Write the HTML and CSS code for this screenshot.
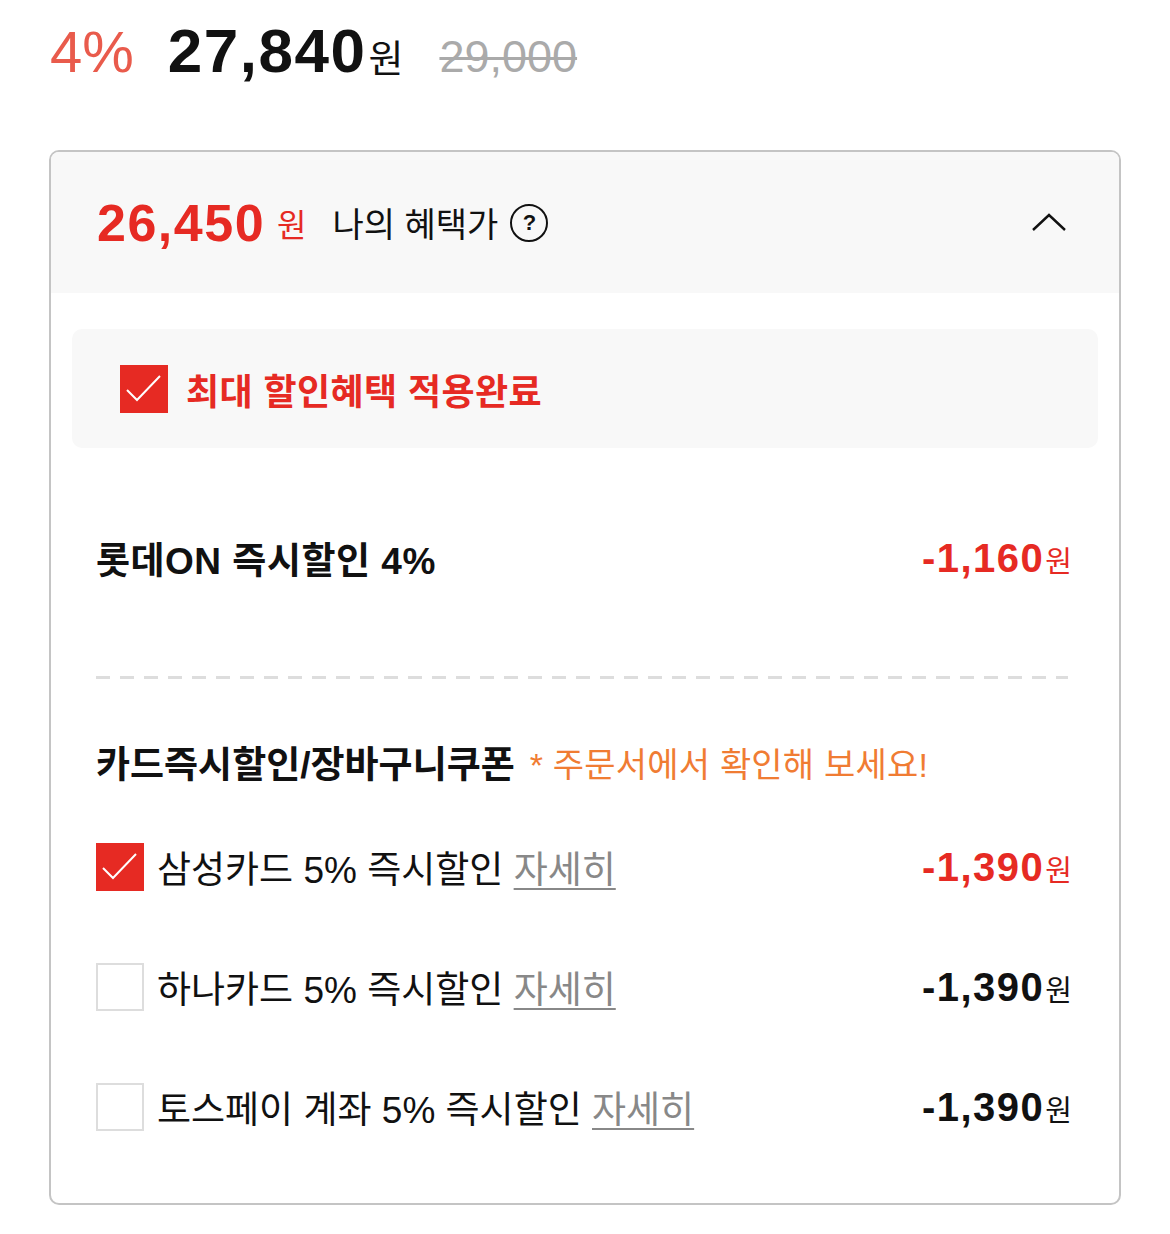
FILE: index.html
```html
<!DOCTYPE html>
<html lang="ko">
<head>
    <meta charset="UTF-8">
    <meta name="viewport" content="width=device-width, initial-scale=1.0">
    <title>혜택가</title>
    <link rel="stylesheet" href="styles.css">
</head>
<body>
    <div class="price-line">
        <span class="rate">4%</span>
        <span class="sale">27,840</span><span class="sale-won">원</span>
        <span class="origin">29,000</span>
    </div>

    <div class="benefit-box">
        <div class="benefit-head">
            <span class="my-price">26,450</span>
            <span class="my-won">원</span>
            <span class="my-label">나의 혜택가</span>
            <span class="help">?</span>
            <svg class="chevron" width="36" height="20" viewBox="0 0 36 20">
                <polyline points="2,17 18,2 34,17" fill="none" stroke="#111" stroke-width="2.4"/>
            </svg>
        </div>

        <div class="benefit-body">
            <div class="applied">
                <span class="check on">
                    <svg width="48" height="48" viewBox="0 0 48 48"><polyline points="7,25 17,35 40,11" fill="none" stroke="#fff" stroke-width="2"/></svg>
                </span>
                <span class="applied-text">최대 할인혜택 적용완료</span>
            </div>

            <div class="list">
                <div class="row first">
                    <span class="row-title">롯데ON 즉시할인 4%</span>
                    <span class="amount red">-1,160<em>원</em></span>
                </div>

                <div class="dashed"></div>

                <div class="section-title">
                    <strong>카드즉시할인/장바구니쿠폰</strong>
                    <span class="note">* 주문서에서 확인해 보세요!</span>
                </div>

                <div class="row card">
                    <span class="check on">
                        <svg width="48" height="48" viewBox="0 0 48 48"><polyline points="7,25 17,35 40,11" fill="none" stroke="#fff" stroke-width="2"/></svg>
                    </span>
                    <span class="card-name">삼성카드 5% 즉시할인 <a href="#">자세히</a></span>
                    <span class="amount red">-1,390<em>원</em></span>
                </div>

                <div class="row card">
                    <span class="check"></span>
                    <span class="card-name">하나카드 5% 즉시할인 <a href="#">자세히</a></span>
                    <span class="amount">-1,390<em>원</em></span>
                </div>

                <div class="row card">
                    <span class="check"></span>
                    <span class="card-name">토스페이 계좌 5% 즉시할인 <a href="#">자세히</a></span>
                    <span class="amount">-1,390<em>원</em></span>
                </div>
            </div>
        </div>
    </div>
</body>
</html>
```

FILE: styles.css
```css
body {
    margin: 0;
    background: #fff;
    color: #111;
    font-family: "Liberation Sans", "Noto Sans CJK KR", sans-serif;
}

.price-line {
    display: flex;
    align-items: baseline;
    padding: 15px 0 0 50px;
    height: 81px;
}
.rate { font-size: 58px; color: #e95b4c; margin-right: 34px; }
.sale { font-size: 62px; font-weight: bold; letter-spacing: 1.5px; }
.sale-won { font-size: 38px; margin-left: 2px; }
.origin {
    font-size: 45px;
    color: #aaa;
    margin-left: 36px;
    text-decoration: line-through;
    text-decoration-thickness: 3px;
}

.benefit-box {
    margin: 54px 49px 0 49px;
    border: 2px solid #c4c4c4;
    border-radius: 10px;
    overflow: hidden;
    height: 1051px;
}

.benefit-head {
    display: flex;
    align-items: center;
    height: 141px;
    padding: 0 52px 0 46px;
    background: #f8f8f8;
}
.my-price { font-size: 52px; font-weight: bold; color: #e62a23; letter-spacing: 1.5px; }
.my-won { font-size: 32px; color: #e62a23; margin-left: 12px; }
.my-label { font-size: 34px; margin-left: 26px; }
.help {
    display: inline-flex;
    align-items: center;
    justify-content: center;
    width: 34px;
    height: 34px;
    border: 2px solid #111;
    border-radius: 50%;
    font-size: 22px;
    font-weight: bold;
    margin-left: 12px;
}
.chevron { margin-left: auto; }

.benefit-body { padding: 36px 21px 0 21px; }

.applied {
    display: flex;
    align-items: center;
    height: 119px;
    padding-left: 48px;
    background: #f8f8f8;
    border-radius: 10px;
}
.applied-text {
    font-size: 36px;
    font-weight: bold;
    color: #e62a23;
    margin-left: 18px;
    letter-spacing: 0.4px;
}

.check {
    display: inline-block;
    width: 44px;
    height: 44px;
    border: 2px solid #ddd;
    background: #fff;
    flex-shrink: 0;
}
.check.on { width: 48px; height: 48px; border: none; background: #e62a23; }
.check svg { display: block; }

.list { padding: 0 26px 0 24px; }

.row {
    display: flex;
    align-items: center;
}
.row.first { height: 60px; margin-top: 80px; }
.row-title { font-size: 37px; font-weight: bold; letter-spacing: 0.5px; }

.amount {
    margin-left: auto;
    font-size: 40px;
    font-weight: bold;
    letter-spacing: 1.5px;
}
.amount em { font-style: normal; font-weight: normal; font-size: 29px; letter-spacing: 0; margin-left: 1px; }
.red { color: #e62a23; }

.dashed {
    margin: 88px 4px 0 0;
    height: 3px;
    background: repeating-linear-gradient(90deg, #ddd 0 14px, transparent 14px 24px);
}

.section-title {
    display: flex;
    align-items: center;
    height: 50px;
    margin-top: 58px;
}
.section-title strong { font-size: 37px; }
.note { font-size: 34px; color: #f07c33; margin-left: 15px; letter-spacing: 0.2px; }

.row.card { height: 48px; margin-top: 72px; }
.row.card:nth-of-type(4) { margin-top: 56px; }
.card-name { font-size: 37px; margin-left: 13px; }
.card-name a { color: #888; text-decoration: underline; text-underline-offset: 5px; text-decoration-thickness: 2px; }
```
